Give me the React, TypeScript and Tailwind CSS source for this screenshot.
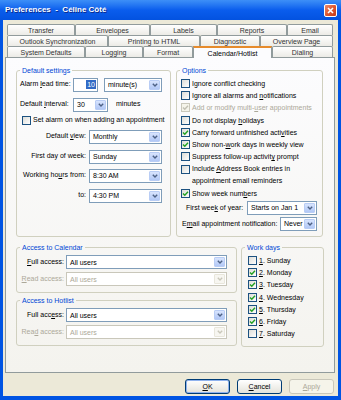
import React from "react";

type Tb = { label: React.ReactNode; w: string; active?: boolean };

const rows: Tb[][] = [
  [
    { label: "Transfer", w: "w-[68px]" },
    { label: "Envelopes", w: "w-[75px]" },
    { label: "Labels", w: "w-[67px]" },
    { label: "Reports", w: "w-[70px]" },
    { label: "Email", w: "w-[46px]" },
  ],
  [
    { label: "Outlook Synchronization", w: "w-[101px]" },
    { label: "Printing to HTML", w: "w-[92px]" },
    { label: "Diagnostic", w: "w-[60px]" },
    { label: "Overview Page", w: "w-[73px]" },
  ],
  [
    { label: "System Defaults", w: "w-[78px]" },
    { label: "Logging", w: "w-[58px]" },
    { label: "Format", w: "w-[50px]" },
    { label: "Calendar/Hotlist", w: "w-[79px]", active: true },
    { label: "Dialing", w: "w-[61px]" },
  ],
];

function Tab({ label, w, active }: Tb) {
  if (active) {
    return (
      <div className={`${w} relative z-10 -mb-px h-[12px] flex items-start justify-center pt-px border-x border-t-2 border-x-[#919b9c] border-t-[#e68b2c] bg-[#fcfcfe] leading-[9px]`}>
        {label}
      </div>
    );
  }
  return (
    <div className={`${w} h-[11px] flex items-center justify-center border-l border-t border-r border-[#919b9c] rounded-t-[2px] bg-linear-to-b from-white to-[#ecebe6] leading-[9px] text-[#333]`}>
      {label}
    </div>
  );
}

function Chevron({ disabled }: { disabled?: boolean }) {
  return (
    <svg width="6" height="4" viewBox="0 0 6 4">
      <path d="M0.8 0.8 L3 3 L5.2 0.8" fill="none" stroke={disabled ? "#c9c7ba" : "#4d6185"} strokeWidth="1.4" />
    </svg>
  );
}

function Select({ value, w, disabled }: { value: string; w: string; disabled?: boolean }) {
  return (
    <div className={`${w} h-[14px] shrink-0 flex items-center border bg-white ${disabled ? "border-[#c9c7ba] text-[#aca899]" : "border-[#7f9db9]"}`}>
      <span className="flex-1 pl-[3px] whitespace-nowrap overflow-hidden leading-[9px]">{value}</span>
      <span className={`mr-px h-[10px] w-[11px] flex items-center justify-center rounded-[1px] border ${disabled ? "border-[#e8e6db] bg-[#f7f6f1]" : "border-[#b9cdf5] bg-linear-to-b from-[#d8e4fd] to-[#b2c8f6]"}`}>
        <Chevron disabled={disabled} />
      </span>
    </div>
  );
}

function Box({ checked, disabled }: { checked?: boolean; disabled?: boolean }) {
  return (
    <span className={`flex h-[9px] w-[9px] shrink-0 items-center justify-center border ${disabled ? "border-[#cac8bb] bg-[#f5f4ea]" : "border-[#1c5180] bg-linear-to-br from-[#dcdcd7] to-white"}`}>
      {checked && (
        <svg width="7" height="7" viewBox="0 0 7 7">
          <path d="M1 3.4 L2.8 5.2 L6 1.8" fill="none" stroke={disabled ? "#c2c0b4" : "#21a121"} strokeWidth="1.4" />
        </svg>
      )}
    </span>
  );
}

function Check({ children, checked, disabled }: { children: React.ReactNode; checked?: boolean; disabled?: boolean }) {
  return (
    <div className={`h-[12.3px] flex items-center gap-[2px] whitespace-nowrap leading-[9px] ${disabled ? "text-[#aca899]" : ""}`}>
      <Box checked={checked} disabled={disabled} />
      <span>{children}</span>
    </div>
  );
}

function Group({ title, className, children }: { title: string; className: string; children: React.ReactNode }) {
  return (
    <fieldset className={`${className} border border-[#d0d0bf] rounded-[3px]`}>
      <legend className="ml-[3px] px-[2px] leading-[9px] text-[#0046d5]">{title}</legend>
      {children}
    </fieldset>
  );
}

function Btn({ children, disabled, def }: { children: React.ReactNode; disabled?: boolean; def?: boolean }) {
  return (
    <div
      className={`w-[45px] h-[15px] flex items-center justify-center rounded-[3px] border leading-[9px] ${
        disabled
          ? "border-[#c9c7ba] bg-[#f5f4ea] text-[#aca899]"
          : "border-[#003c74] bg-linear-to-b from-white to-[#e4e3db]"
      } ${def ? "shadow-[inset_0_0_0_1px_#8fb2ee]" : ""}`}
    >
      {children}
    </div>
  );
}

export default function App() {
  return (
    <div className="w-[341px] h-[400px] flex flex-col bg-[#0054e3] font-['Liberation_Sans',Arial,sans-serif] text-[7px] text-black">
      {/* title bar */}
      <div className="h-[20px] shrink-0 flex items-center justify-between pl-[5px] pr-[4px] bg-linear-to-b from-[#3d8ff7] via-[#0a5ded] to-[#0352e0]">
        <span className="text-white font-bold text-[8px] whitespace-pre [text-shadow:1px_1px_0_#0c2a8a]">Preferences  -  Céline Côté</span>
        <span className="h-[13px] w-[13px] flex items-center justify-center rounded-[2px] border border-white bg-linear-to-br from-[#e98a6c] via-[#e0582f] to-[#c2391a]">
          <svg width="7" height="7" viewBox="0 0 7 7">
            <path d="M1 1 L6 6 M6 1 L1 6" stroke="white" strokeWidth="1.6" />
          </svg>
        </span>
      </div>

      {/* body */}
      <div className="flex-1 mx-[3px] mb-[4px] flex flex-col bg-[#ece9d8] pl-[2px] pr-[3px]">
        <div className="pt-[4px] pl-[2px] flex flex-col">
          {rows.map((r, i) => (
            <div key={i} className="h-[11px] flex items-end">
              {r.map((t) => (
                <Tab key={String(t.label)} {...t} />
              ))}
            </div>
          ))}
        </div>

        {/* tab pane */}
        <div className="h-[316px] border border-[#919b9c] bg-linear-to-b from-[#fcfcfe] to-[#f4f3ee] pt-[8px] pl-[10px]">
          <div className="flex gap-[5px]">
            <Group title="Default settings" className="w-[155px] h-[171px]">
              <div className="mt-[2px] h-[15px] flex items-center pl-[3px]">
                <span className="w-[53px] whitespace-nowrap">
                  Alarm <u>l</u>ead time:
                </span>
                <div className="w-[25px] h-[14px] flex items-center justify-end pr-[1px] border border-[#7f9db9] bg-white">
                  <span className="bg-[#316ac5] text-white px-px leading-[9px]">10</span>
                </div>
                <div className="ml-[6px]">
                  <Select value="minute(s)" w="w-[58px]" />
                </div>
              </div>
              <div className="mt-[5px] h-[15px] flex items-center pl-[3px]">
                <span className="w-[53px] whitespace-nowrap">
                  Default <u>i</u>nterval:
                </span>
                <Select value="30" w="w-[35px]" />
                <span className="ml-[8px]">minutes</span>
              </div>
              <div className="mt-[3px] h-[10px] flex items-center gap-[2px] pl-[5px] whitespace-nowrap">
                <Box />
                <span>Set alarm on when adding an appointment</span>
              </div>
              {[
                ["Default ", "v", "iew:", "Monthly", "mt-[4px]"],
                ["First day of week:", "", "", "Sunday", "mt-[5px]"],
                ["Working ho", "u", "rs from:", "8:30 AM", "mt-[4px]"],
                ["to:", "", "", "4:30 PM", "mt-[5px]"],
              ].map(([a, u, b, v, mt]) => (
                <div key={v} className={`${mt} h-[15px] flex items-center`}>
                  <span className="w-[72px] pr-[3px] text-right whitespace-nowrap">
                    {a}
                    {u && <u>{u}</u>}
                    {b}
                  </span>
                  <Select value={v} w="w-[73px]" />
                </div>
              ))}
            </Group>

            <Group title="Options" className="w-[147px] h-[171px]">
              <div className="mt-[2px] pl-[4px] flex flex-col">
                <Check>Ignore conflict checking</Check>
                <Check>
                  Ignore all alarms and <u>n</u>otifications
                </Check>
                <Check checked disabled>
                  Add or modify multi-<u>u</u>ser appointments
                </Check>
                <Check>
                  Do not display <u>h</u>olidays
                </Check>
                <Check checked>
                  Carry forward unfinished acti<u>v</u>ities
                </Check>
                <Check checked>
                  Show non-<u>w</u>ork days in weekly view
                </Check>
                <Check>
                  Suppress follow-up activit<u>y</u> prompt
                </Check>
                <div className="flex items-start gap-[2px] leading-[12.3px] whitespace-nowrap">
                  <span className="mt-[1.5px]">
                    <Box />
                  </span>
                  <span>
                    Include <u>A</u>ddress Book entries in
                    <br />
                    appointment email reminders
                  </span>
                </div>
                <Check checked>
                  Show week num<u>b</u>ers
                </Check>
              </div>
              <div className="mt-px h-[14px] flex items-center justify-between pl-[9px] pr-[5px] whitespace-nowrap">
                <span>
                  First wee<u>k</u> of year:
                </span>
                <Select value="Starts on Jan 1" w="w-[70px]" />
              </div>
              <div className="mt-[2px] h-[14px] flex items-center justify-between pl-[5px] pr-[5px] whitespace-nowrap">
                <span>
                  E<u>m</u>ail appointment notification:
                </span>
                <Select value="Never" w="w-[37px]" />
              </div>
            </Group>
          </div>

          <div className="mt-[6px] flex gap-[4px]">
            <div className="flex flex-col gap-[3px]">
              <Group title="Access to Calendar" className="w-[221px] h-[50px]">
                <div className="mt-[3px] h-[14px] flex items-center">
                  <span className="w-[49px] pr-[2px] text-right">
                    <u>F</u>ull access:
                  </span>
                  <Select value="All users" w="w-[161px]" />
                </div>
                <div className="mt-[3px] h-[14px] flex items-center text-[#aca899]">
                  <span className="w-[49px] pr-[2px] text-right">
                    <u>R</u>ead access:
                  </span>
                  <Select value="All users" w="w-[161px]" disabled />
                </div>
              </Group>
              <Group title="Access to Hotlist" className="w-[221px] h-[50px]">
                <div className="mt-[3px] h-[14px] flex items-center">
                  <span className="w-[49px] pr-[2px] text-right">
                    Full acc<u>e</u>ss:
                  </span>
                  <Select value="All users" w="w-[161px]" />
                </div>
                <div className="mt-[3px] h-[14px] flex items-center text-[#aca899]">
                  <span className="w-[49px] pr-[2px] text-right">
                    Rea<u>d</u> access:
                  </span>
                  <Select value="All users" w="w-[161px]" disabled />
                </div>
              </Group>
            </div>

            <Group title="Work days" className="w-[83px] h-[104px]">
              <div className="mt-[2px] pl-[6px] flex flex-col">
                {[
                  ["1", "Sunday", false],
                  ["2", "Monday", true],
                  ["3", "Tuesday", true],
                  ["4", "Wednesday", true],
                  ["5", "Thursday", true],
                  ["6", "Friday", true],
                  ["7", "Saturday", false],
                ].map(([n, d, c]) => (
                  <Check key={String(n)} checked={Boolean(c)}>
                    <u>{n}</u>. {d}
                  </Check>
                ))}
              </div>
            </Group>
          </div>
        </div>

        {/* buttons */}
        <div className="mt-[6px] flex justify-end gap-[7px] pr-px">
          <Btn def>
            <u>O</u>K
          </Btn>
          <Btn>
            <u>C</u>ancel
          </Btn>
          <Btn disabled>
            <u>A</u>pply
          </Btn>
        </div>
      </div>
    </div>
  );
}
